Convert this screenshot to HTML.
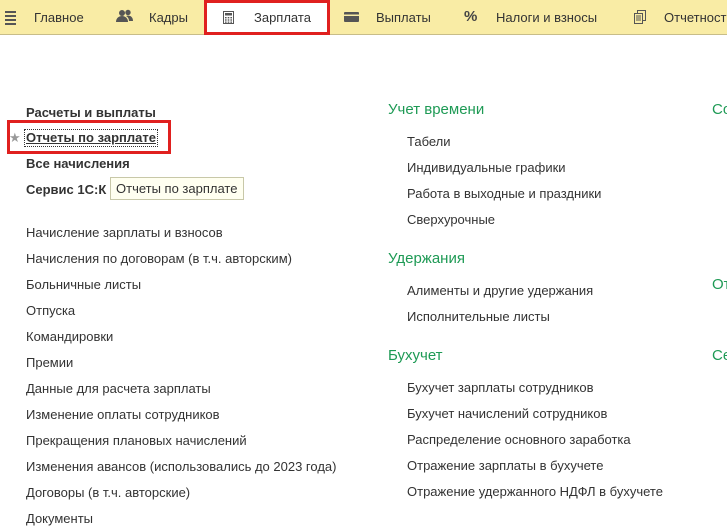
<!DOCTYPE html>
<html><head><meta charset="utf-8"><style>
body{margin:0;width:727px;height:514px;overflow:hidden;background:#fff;font-family:"Liberation Sans",Arial,sans-serif;color:#333;position:relative}
.nav{position:absolute;left:0;top:0;width:727px;height:34px;background:#f9eca5;border-bottom:1px solid #c8bd88}
.t{position:absolute;font-size:13px;white-space:nowrap;line-height:16px;margin-top:1px}
.n{position:absolute;font-size:13px;top:10px;color:#333;white-space:nowrap}
.b{font-weight:bold}
.h{position:absolute;font-size:15px;color:#1e9a55;white-space:nowrap;line-height:18px;margin-top:2px}
</style></head><body>
<div class="nav"></div>
<div style="position:absolute;left:204px;top:0;width:126px;height:35px;background:#fff;box-sizing:border-box;border:3px solid #e0201f"></div>
<div style="position:absolute;left:5px;top:11px;width:11px;height:2px;background:#555;box-shadow:0 4px 0 #555,0 8px 0 #555,0 12px 0 #555"></div>
<div class="n" style="left:34px">Главное</div>
<svg style="position:absolute;left:116px;top:9px" width="18" height="14" viewBox="0 0 18 14"><circle cx="6" cy="4" r="3" fill="#555"/><circle cx="12" cy="3.5" r="2.7" fill="#555"/><path d="M0 13c0-4 3-6 6-6s6 2 6 6z" fill="#555"/><path d="M10 7c3-1 7 0 7 5h-4c0-2-1-4-3-5z" fill="#555"/></svg>
<div class="n" style="left:149px">Кадры</div>
<svg style="position:absolute;left:223px;top:11px" width="11" height="13" viewBox="0 0 11 13"><rect x="0.5" y="0.5" width="10" height="12" fill="none" stroke="#555"/><rect x="2" y="2" width="7" height="2.5" fill="#555"/><g fill="#555"><rect x="2" y="6" width="1.6" height="1.4"/><rect x="4.7" y="6" width="1.6" height="1.4"/><rect x="7.4" y="6" width="1.6" height="1.4"/><rect x="2" y="8.3" width="1.6" height="1.4"/><rect x="4.7" y="8.3" width="1.6" height="1.4"/><rect x="7.4" y="8.3" width="1.6" height="1.4"/><rect x="2" y="10.5" width="1.6" height="1.3"/><rect x="4.7" y="10.5" width="1.6" height="1.3"/><rect x="7.4" y="10.5" width="1.6" height="1.3"/></g></svg>
<div class="n" style="left:254px">Зарплата</div>
<svg style="position:absolute;left:344px;top:12px" width="15" height="10" viewBox="0 0 15 10"><rect width="15" height="10" rx="1" fill="#555"/><rect y="2.5" width="15" height="1.5" fill="#f9eca5"/></svg>
<div class="n" style="left:376px">Выплаты</div>
<div class="n b" style="left:464px;top:8px;font-size:15px;color:#444">%</div>
<div class="n" style="left:496px">Налоги и взносы</div>
<svg style="position:absolute;left:634px;top:10px" width="12" height="14" viewBox="0 0 12 14"><rect x="3.5" y="0.5" width="8" height="10" fill="none" stroke="#555"/><rect x="0.5" y="3.5" width="8" height="10" fill="#f9eca5" stroke="#555"/><path d="M2 6h5M2 8h5M2 10h5" stroke="#555"/></svg>
<div class="n" style="left:664px">Отчетност</div>

<div class="t b" style="left:26px;top:104px">Расчеты и выплаты</div>
<div style="position:absolute;left:7px;top:120px;width:164px;height:34px;box-sizing:border-box;border:3px solid #e0201f"></div>
<div style="position:absolute;left:9px;top:130px;font-size:13px;color:#999;line-height:16px">★</div>
<div class="t b" style="left:25px;top:129px;text-decoration:underline;outline:1px dotted #333;outline-offset:0;padding:0 1px">Отчеты по зарплате</div>
<div class="t b" style="left:26px;top:155px">Все начисления</div>
<div class="t b" style="left:26px;top:181px">Сервис 1С:К</div>
<div style="position:absolute;left:110px;top:177px;width:134px;height:23px;box-sizing:border-box;background:#fffff0;border:1px solid #c8c8a8;font-size:13px;line-height:22px;padding-left:5px;color:#333;white-space:nowrap">Отчеты по зарплате</div>

<div class="t" style="left:26px;top:224px">Начисление зарплаты и взносов</div>
<div class="t" style="left:26px;top:250px">Начисления по договорам (в т.ч. авторским)</div>
<div class="t" style="left:26px;top:276px">Больничные листы</div>
<div class="t" style="left:26px;top:302px">Отпуска</div>
<div class="t" style="left:26px;top:328px">Командировки</div>
<div class="t" style="left:26px;top:354px">Премии</div>
<div class="t" style="left:26px;top:380px">Данные для расчета зарплаты</div>
<div class="t" style="left:26px;top:406px">Изменение оплаты сотрудников</div>
<div class="t" style="left:26px;top:432px">Прекращения плановых начислений</div>
<div class="t" style="left:26px;top:458px">Изменения авансов (использовались до 2023 года)</div>
<div class="t" style="left:26px;top:484px">Договоры (в т.ч. авторские)</div>
<div class="t" style="left:26px;top:510px">Документы</div>

<div class="h" style="left:388px;top:99px">Учет времени</div>
<div class="t" style="left:407px;top:133px">Табели</div>
<div class="t" style="left:407px;top:159px">Индивидуальные графики</div>
<div class="t" style="left:407px;top:185px">Работа в выходные и праздники</div>
<div class="t" style="left:407px;top:211px">Сверхурочные</div>
<div class="h" style="left:388px;top:248px">Удержания</div>
<div class="t" style="left:407px;top:282px">Алименты и другие удержания</div>
<div class="t" style="left:407px;top:308px">Исполнительные листы</div>
<div class="h" style="left:388px;top:345px">Бухучет</div>
<div class="t" style="left:407px;top:379px">Бухучет зарплаты сотрудников</div>
<div class="t" style="left:407px;top:405px">Бухучет начислений сотрудников</div>
<div class="t" style="left:407px;top:431px">Распределение основного заработка</div>
<div class="t" style="left:407px;top:457px">Отражение зарплаты в бухучете</div>
<div class="t" style="left:407px;top:483px">Отражение удержанного НДФЛ в бухучете</div>

<div class="h" style="left:712px;top:99px">Со</div>
<div class="h" style="left:712px;top:274px">От</div>
<div class="h" style="left:712px;top:345px">Се</div>
</body></html>
